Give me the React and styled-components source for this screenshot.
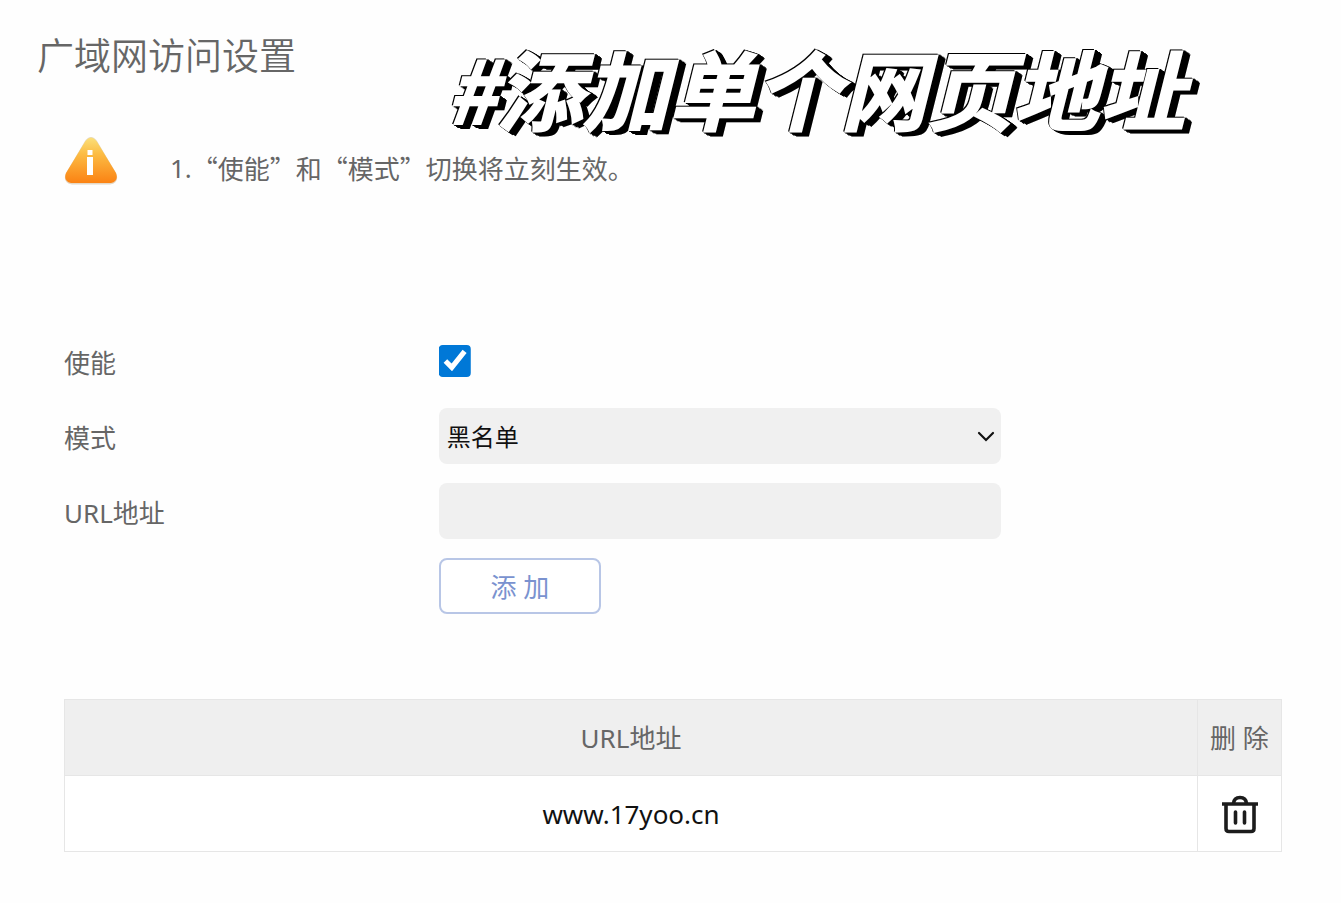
import React from 'react'
import styled, { createGlobalStyle } from 'styled-components'

const GlobalStyle = createGlobalStyle`
  * {
    box-sizing: border-box;
  }

  body {
    margin: 0;
    background: #fefefe;
    color: #666;
    font-family: 'Noto Sans', 'Noto Sans CJK SC', sans-serif;
    font-size: 26px;
    line-height: 34px;
  }
`

const Page = styled.main`
  padding: 32px 59px 50px 64px;
`

const Header = styled.header`
  display: flex;
  align-items: flex-start;
  gap: 150px;
  height: 105px;
  margin-left: -27px;
`

const Title = styled.h1`
  margin: 0;
  font-size: 37px;
  line-height: 48px;
  font-weight: 350;
  white-space: nowrap;
`

const Caption = styled.p`
  margin: 10px 0 0;
  color: #fff;
  font-family: 'Noto Sans CJK SC', sans-serif;
  font-size: 86px;
  line-height: 90px;
  font-weight: 700;
  font-style: italic;
  white-space: nowrap;
  -webkit-text-stroke: 2px #fff;
  filter: drop-shadow(1px 1px 0 #000) drop-shadow(-1px -1px 0 #000)
    drop-shadow(3px 1px 0 #000) drop-shadow(3px 2px 0 #000);
`

const Note = styled.section`
  display: flex;
  align-items: flex-end;
  gap: 52px;
  margin-bottom: 148px;

  svg {
    flex: none;
  }
`

const NoteText = styled.p`
  margin: 0;
  display: flex;
`

const Cjk = styled.span`
  font-family: 'Noto Sans CJK SC', sans-serif;
`

const Form = styled.form`
  display: grid;
  gap: 19px;
  margin-bottom: 85px;
`

const Row = styled.div`
  display: grid;
  grid-template-columns: 4fr 6fr 3fr;
  align-items: center;
  min-height: 56px;
`

const Label = styled.label`
  padding-top: 3px;
`

const Checkbox = styled.input`
  width: 32px;
  height: 32px;
  margin: 0;
  accent-color: #0078d7;
  clip-path: inset(0 round 4px);
`

const SelectWrap = styled.div`
  position: relative;

  svg {
    position: absolute;
    top: 23px;
    right: 6px;
    pointer-events: none;
  }
`

const Select = styled.select`
  display: block;
  width: 100%;
  height: 56px;
  padding: 0 8px;
  border: 0;
  border-radius: 8px;
  background: #f0f0f0;
  color: #111;
  font-family: inherit;
  font-size: 24px;
  appearance: none;
`

const TextInput = styled.input`
  width: 100%;
  height: 56px;
  padding: 0 8px;
  border: 0;
  border-radius: 8px;
  background: #f0f0f0;
  font-family: inherit;
  font-size: 24px;
`

const AddButton = styled.button`
  grid-column: 2;
  justify-self: start;
  width: 162px;
  height: 56px;
  border: 2px solid #b8c6e6;
  border-radius: 8px;
  background: #fff;
  color: #7a92cf;
  font-family: inherit;
  font-size: 26px;
`

const Table = styled.table`
  width: 100%;
  border-collapse: collapse;
  table-layout: fixed;
  text-align: center;

  th,
  td {
    height: 76px;
    padding: 0;
    border: 1px solid #e6e6e6;
  }

  th {
    background: #efefef;
    font-weight: 400;
  }

  td {
    background: #fff;
    color: #111;
  }
`

const DeleteColumn = styled.col`
  width: 84px;
`

const IconButton = styled.button`
  display: block;
  margin: 0 auto;
  padding: 0;
  border: 0;
  background: none;
  color: #1c1c1c;

  svg {
    display: block;
  }
`

const WarningIcon = () => (
  <svg width="54" height="48" viewBox="0 0 54 48" aria-hidden="true">
    <defs>
      <linearGradient id="warning" x1="0" y1="0" x2="0" y2="1">
        <stop offset="0" stopColor="#fbe07a" />
        <stop offset="0.35" stopColor="#fcbd45" />
        <stop offset="1" stopColor="#fb8213" />
      </linearGradient>
    </defs>
    <path
      d="M21 4Q27 -4 33 4L52 36Q56 46 46 47.5H8Q-2 46 2 36Z"
      fill="#d9c7ae"
      opacity="0.7"
    />
    <path d="M21.5 4Q27 -3 32.5 4L52 36Q55 44 47 46H7Q-1 44 2 36Z" fill="url(#warning)" />
    <path d="M23.500 13h5v5h-5zM23 20h6v18h-6z" fill="#fff" />
  </svg>
)

const ChevronIcon = () => (
  <svg width="18" height="12" viewBox="0 0 18 12" fill="none" aria-hidden="true">
    <path d="M2 2l7 7 7-7" stroke="#111" strokeWidth="2.2" strokeLinecap="round" />
  </svg>
)

const TrashIcon = () => (
  <svg width="38" height="40" viewBox="0 0 38 40" fill="none" stroke="currentColor" aria-hidden="true">
    <path d="M1 10h36" strokeWidth="3.600" />
    <path d="M12.500 9.500Q13 3.500 19 3.500T25.500 9.500" strokeWidth="3.600" />
    <path d="M5 10v24.500q0 3 3 3h22q3 0 3-3V10" strokeWidth="3.600" />
    <path d="M14.500 18v11M23.500 18v11" strokeWidth="3.600" strokeLinecap="round" />
  </svg>
)

const urls = ['www.17yoo.cn']

const App = () => (
  <>
    <GlobalStyle />
    <Page lang="zh-CN">
      <Header>
        <Title>广域网访问设置</Title>
        <Caption>#添加单个网页地址</Caption>
      </Header>

      <Note>
        <WarningIcon />
        <NoteText>
          <span>1.</span>
          <Cjk>“使能”和“模式”切换将立刻生效。</Cjk>
        </NoteText>
      </Note>

      <Form onSubmit={e => e.preventDefault()}>
        <Row>
          <Label htmlFor="enable">使能</Label>
          <Checkbox id="enable" type="checkbox" defaultChecked />
        </Row>
        <Row>
          <Label htmlFor="mode">模式</Label>
          <SelectWrap>
            <Select id="mode" defaultValue="black">
              <option value="black">黑名单</option>
              <option value="white">白名单</option>
            </Select>
            <ChevronIcon />
          </SelectWrap>
        </Row>
        <Row>
          <Label htmlFor="url">URL地址</Label>
          <TextInput id="url" type="text" />
        </Row>
        <Row>
          <AddButton type="submit">添 加</AddButton>
        </Row>
      </Form>

      <Table>
        <colgroup>
          <col />
          <DeleteColumn />
        </colgroup>
        <thead>
          <tr>
            <th scope="col">URL地址</th>
            <th scope="col">删 除</th>
          </tr>
        </thead>
        <tbody>
          {urls.map(url => (
            <tr key={url}>
              <td>{url}</td>
              <td>
                <IconButton type="button" aria-label="删除">
                  <TrashIcon />
                </IconButton>
              </td>
            </tr>
          ))}
        </tbody>
      </Table>
    </Page>
  </>
)

export default App
